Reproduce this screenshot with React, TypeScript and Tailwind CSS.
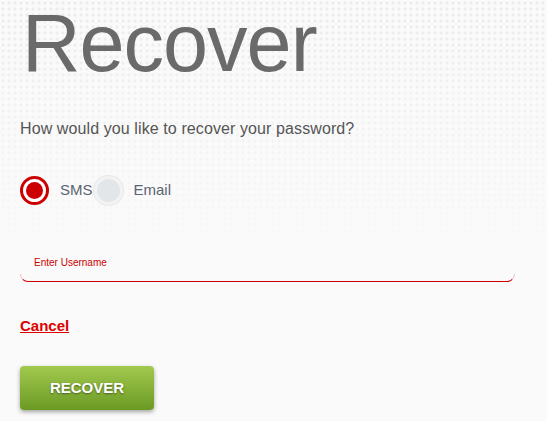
import React from 'react';

const App: React.FC = () => {
  return (
    <div
      className="w-[547px] h-[421px] overflow-hidden bg-[#fafafa] bg-[linear-gradient(to_bottom,rgba(250,250,250,0)_0%,rgba(250,250,250,0.5)_30%,#fafafa_62%),radial-gradient(circle,#ebebeb_1.3px,transparent_1.8px)] bg-[length:100%_100%,6px_6px] pl-5 pt-[1px]"
      style={{ fontFamily: '"Liberation Sans", Arial, sans-serif' }}
    >
      <h1 className="text-[81px] leading-[84px] text-[#6a6a6a] tracking-[-1px] ml-[2px]">Recover</h1>

      <p className="mt-[34px] text-[16px] leading-[20px] tracking-[0.1px] text-[#555]">
        How would you like to recover your password?
      </p>

      {/* method picker */}
      <div className="mt-[37px] flex items-center h-[29px]">
        <span className="w-[29px] h-[29px] rounded-full border-[3px] border-[#cc0000] bg-white flex items-center justify-center">
          <span className="w-[17px] h-[17px] rounded-full bg-[#cc0000]" />
        </span>
        <span className="ml-[11px] text-[15px] text-[#5b6472]">SMS</span>
        <span className="ml-[1px] w-[29px] h-[29px] rounded-full border-[3px] border-[#f3f3f3] bg-[#e3e6e9] shadow-[0_0_0_1px_#e8e8e8]" />
        <span className="ml-[11px] text-[15px] text-[#5b6472]">Email</span>
      </div>

      <div className="mt-[51px] w-[495px]">
        <div className="pl-[14px] text-[10px] leading-[14px] text-[#cc0000]">Enter Username</div>
        <div className="mt-[4px] h-[8px] rounded-b-[8px] border border-t-0 border-b-[#cc0000] border-x-[#ecc4c4]" />
      </div>

      <a href="#" className="block mt-[35px] w-fit text-[15px] leading-[18px] font-bold text-[#dd0000] underline">
        Cancel
      </a>

      <button className="mt-[31px] w-[134px] h-[44px] rounded-[4px] bg-[linear-gradient(to_bottom,#a2c94e,#6b9a24)] shadow-[0_2px_4px_rgba(0,0,0,0.35)] text-white text-[15px] font-bold [text-shadow:0_1px_2px_rgba(0,0,0,0.45)]">
        RECOVER
      </button>
    </div>
  );
};

export default App;
